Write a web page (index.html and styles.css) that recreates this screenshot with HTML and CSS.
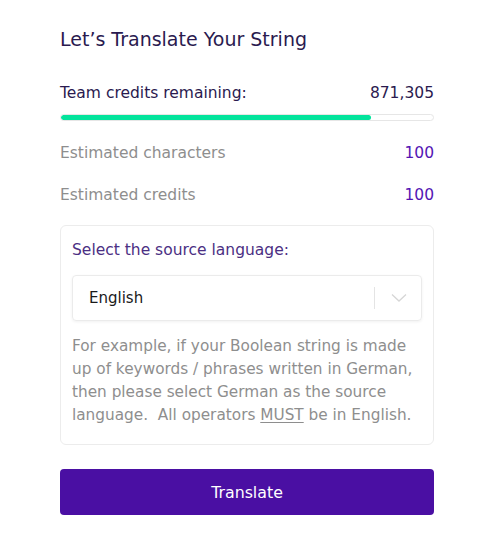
FILE: index.html
```html
<!DOCTYPE html>
<html>
<head>
<meta charset="utf-8">
<link rel="stylesheet" href="styles.css">
</head>
<body>
<main class="panel">
  <h1 class="title">Let’s Translate Your String</h1>
  <div class="credits">
    <div class="row row-credits">
      <span>Team credits remaining:</span>
      <span>871,305</span>
    </div>
    <div class="bar"><div class="fill" style="width: 83.4%"></div></div>
  </div>
  <div class="row row-est">
    <span class="label">Estimated characters</span>
    <span class="value">100</span>
  </div>
  <div class="row row-est">
    <span class="label">Estimated credits</span>
    <span class="value">100</span>
  </div>
  <section class="card">
    <div class="card-label">Select the source language:</div>
    <div class="select">
      <span class="select-value">English</span>
      <span class="select-sep"></span>
      <svg class="chev" width="16" height="10" viewBox="0 0 16 10"><path d="M1 1.5 L8 8 L15 1.5" fill="none" stroke="#d6d6d6" stroke-width="1.3"/></svg>
    </div>
    <p class="hint">For example, if your Boolean string is made up of keywords / phrases written in German, then please select German as the source language.&nbsp; All operators <u>MUST</u> be in English.</p>
  </section>
  <button class="btn">Translate</button>
</main>
</body>
</html>
```
FILE: styles.css
```css
* { box-sizing: border-box; }
body {
  margin: 0;
  background: #ffffff;
  font-family: "DejaVu Sans", sans-serif;
}
.panel {
  width: 374px;
  margin-left: 60px;
  padding-top: 24px;
  display: flex;
  flex-direction: column;
}
.title {
  margin: 0;
  font-size: 19px;
  font-weight: normal;
  color: #2a1a4f;
  line-height: 30px;
}
.credits { margin-top: 28px; }
.row {
  display: flex;
  justify-content: space-between;
  align-items: center;
}
.row-credits {
  font-size: 15.5px;
  color: #2a1a4f;
  line-height: 22px;
}
.bar {
  margin-top: 10px;
  height: 7px;
  border: 1px solid #e6e6e6;
  border-radius: 4px;
  overflow: hidden;
  background: #fff;
}
.fill {
  height: 100%;
  background: #02e49c;
  border-radius: 4px;
}
.row-est {
  font-size: 15.5px;
  line-height: 22px;
  margin-top: 21px;
}
.row-est + .row-est { margin-top: 20px; }
.label { color: #8e8e8e; }
.value { color: #5314b4; }
.card {
  margin-top: 19px;
  border: 1px solid #ececec;
  border-radius: 6px;
  padding: 12px 11px 17px 11px;
}
.card-label {
  font-size: 15.5px;
  color: #4b2f83;
  line-height: 24px;
}
.select {
  margin-top: 13px;
  height: 46px;
  border: 1px solid #ebebeb;
  border-radius: 4px;
  box-shadow: 0 1px 3px rgba(0,0,0,0.06);
  display: flex;
  align-items: center;
  padding: 0 14px 0 16px;
}
.select-value {
  flex: 1;
  font-size: 15px;
  color: #1a1a1a;
}
.select-sep {
  width: 1px;
  height: 22px;
  background: #e4e4e4;
  margin-right: 16px;
}
.chev { display: block; }
.hint {
  margin: 14px 0 0 0;
  font-size: 15.3px;
  line-height: 23px;
  color: #8e8e8e;
}
.hint u { text-underline-offset: 2px; }
.btn {
  margin-top: 24px;
  height: 46px;
  border: none;
  border-radius: 4px;
  background: #4a0fa3;
  color: #fff;
  font-family: inherit;
  font-size: 15.8px;
}
```
